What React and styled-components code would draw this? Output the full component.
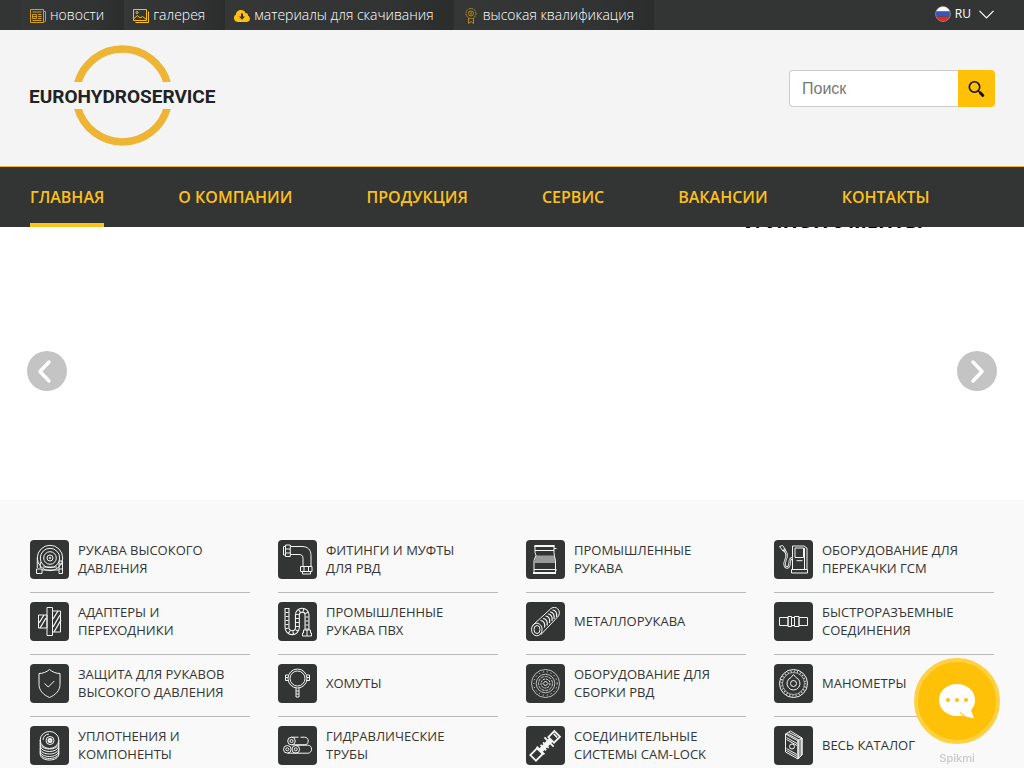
import React from "react";
import styled, { createGlobalStyle } from "styled-components";

const GlobalStyle = createGlobalStyle`
  *, *::before, *::after { box-sizing: border-box; }
  body {
    margin: 0;
    background: #f9f9f9;
    color: #333534;
    font-family: "Open Sans", "Noto Sans", sans-serif;
  }
  a { color: inherit; text-decoration: none; }
`;

const Page = styled.div`
  min-height: 100vh;
  display: flex;
  flex-direction: column;
`;

const TopBar = styled.div`
  display: flex;
  justify-content: space-between;
  height: 30px;
  padding: 0 30px 0 21px;
  background: #333534;
  color: #fff;
`;

const TopLinks = styled.nav`
  display: flex;
`;

const TopLink = styled.a`
  display: flex;
  align-items: center;
  gap: 4px;
  padding: 0 20px 0 9px;
  font-size: 14px;
  font-weight: 300;
  line-height: 30px;
  white-space: nowrap;
  background: linear-gradient(to right, #353736, #323433 70%, #2b2d2c);

  svg { flex: none; margin-top: 2px; }
`;

const Language = styled.button`
  display: flex;
  align-items: center;
  gap: 4px;
  height: 28px;
  padding: 0;
  border: 0;
  background: none;
  color: #fff;
  font: 400 12px/28px "Open Sans", sans-serif;
  cursor: pointer;

  svg:last-child { margin-left: 4px; }
`;

const Header = styled.header`
  display: flex;
  justify-content: space-between;
  align-items: flex-start;
  height: 137px;
  padding: 14px 29px 0;
  background: #f4f4f4;
  border-bottom: 1px solid #eeb32f;
`;

const LogoLink = styled.a`
  display: block;
  line-height: 0;
`;

const Search = styled.form`
  display: flex;
  margin-top: 26px;
`;

const SearchInput = styled.input`
  width: 169px;
  height: 37px;
  padding: 0 12px;
  border: 1px solid #ccc;
  border-right: 0;
  border-radius: 4px 0 0 4px;
  background: #fff;
  color: #333;
  font: 16px "Liberation Sans", Arial, sans-serif;
  outline: none;

  &::placeholder { color: #777; opacity: 1; }
`;

const SearchButton = styled.button`
  display: flex;
  align-items: center;
  justify-content: center;
  width: 37px;
  height: 37px;
  padding: 0;
  border: 0;
  border-radius: 0 4px 4px 0;
  background: #ffc107;
  cursor: pointer;
`;

const MainNav = styled.nav`
  display: flex;
  gap: 74px;
  height: 60px;
  padding: 0 30px;
  background: #333534;
`;

const NavLink = styled.a`
  color: #fbc01e;
  font-size: 16px;
  font-weight: 600;
  line-height: 60px;
  white-space: nowrap;
  box-shadow: ${(p) => (p.$active ? "inset 0 -4px 0 #fbc31b" : "none")};
`;

const Carousel = styled.section`
  position: relative;
  display: flex;
  align-items: center;
  justify-content: space-between;
  height: 273px;
  padding: 15px 27px 0;
  background: #fff;
  overflow: hidden;
`;

const SlideCaption = styled.h2`
  position: absolute;
  top: -20px;
  right: 101px;
  margin: 0;
  color: #000;
  font-size: 20px;
  font-weight: 700;
  line-height: 27px;
`;

const ArrowButton = styled.button`
  width: 40px;
  height: 40px;
  padding: 0;
  border: 0;
  border-radius: 50%;
  background: #c4c4c4;
  line-height: 0;
  cursor: pointer;
`;

const Catalog = styled.section`
  flex: 1;
  padding: 31px 30px 0;
  background: #f9f9f9;
`;

const CatalogGrid = styled.div`
  display: grid;
  grid-template-columns: repeat(4, 1fr);
  column-gap: 28px;
`;

const CatalogItem = styled.a`
  display: flex;
  align-items: center;
  gap: 9px;
  height: ${(p) => (p.$last ? 48 : 62)}px;
  padding: 9px 0 ${(p) => (p.$last ? 0 : 13)}px;
  border-bottom: ${(p) => (p.$last ? 0 : 1)}px solid #bababa;
  font-size: 13px;
  font-weight: 500;
  line-height: 18px;
  text-transform: uppercase;
`;

const CatalogLabel = styled.span`
  padding-bottom: 2px;
  white-space: pre-line;
`;

const IconTile = styled.span`
  flex: none;
  width: 39px;
  height: 39px;
  border-radius: 4px;
  background: #333534;
  line-height: 0;
`;

const Chat = styled.aside`
  position: fixed;
  right: 24px;
  bottom: 2px;
  display: flex;
  flex-direction: column;
  align-items: center;
  gap: 7px;
`;

const ChatButton = styled.button`
  display: flex;
  align-items: center;
  justify-content: center;
  width: 86px;
  height: 86px;
  padding: 0;
  border: 4px solid #ffd042;
  border-radius: 50%;
  background: #ffc107;
  cursor: pointer;
`;

const ChatBrand = styled.a`
  color: #c8c8c8;
  font: 500 11px/15px Inter, sans-serif;
`;

const yellow = "#fdc00f";

const NewsIcon = () => (
  <svg width="16" height="16" viewBox="0 0 16 16" fill="none" stroke="#cf9f18">
    <path d="M.5 1.5h13v13h-13zM13.5 3.5h2v9.5l-1.500 1.500M2.500 4h9M2.500 12.500h9M8 6.500h3.500M8 8.500h3.500M8 10.500h3.500" />
    <path d="M2.500 6.500h4v4h-4zM2.500 8.500h4" />
  </svg>
);

const GalleryIcon = () => (
  <svg width="16" height="16" viewBox="0 0 16 16" fill="none" stroke={yellow}>
    <path d="M.5 1.500h13v11h-13zM2.500 14.500h13V3.500" />
    <path d="M1 10.500l3.500-3 2.500 2.500 2.500-1.500 4 3" />
    <circle cx="4" cy="4.500" r="1" />
  </svg>
);

const CloudIcon = () => (
  <svg width="16" height="16" viewBox="0 0 16 16">
    <path d="M4 14a4 4 0 0 1-2-7.500C2 3.500 4.500 2 7 2c2.300 0 4 1.200 4.500 3 1.800 0 2.800 1.200 2.500 2.700C17 9 16.500 14 12.500 14z" fill={yellow} />
    <path d="M7 5.500h2v3h2L8 11.800 5 8.500h2z" fill="#333534" />
  </svg>
);

const AwardIcon = () => (
  <svg width="16" height="16" viewBox="0 0 16 16" fill="none" stroke="#b48b1b">
    <circle cx="8" cy="5.500" r="5" strokeDasharray="2 .6" />
    <circle cx="8" cy="5.500" r="2.500" />
    <path d="M8 4v3M5.500 10v5.500L8 13.500l2.500 2V10" />
  </svg>
);

const FlagIcon = () => (
  <svg width="16" height="16" viewBox="0 0 16 16">
    <clipPath id="flagDisc"><circle cx="8" cy="8" r="7.500" /></clipPath>
    <g clipPath="url(#flagDisc)">
      <path fill="#fff" d="M0 0h16v5.500H0z" />
      <path fill="#3657b5" d="M0 5.500h16v5H0z" />
      <path fill="#d03030" d="M0 10.500h16V16H0z" />
    </g>
    <circle cx="8" cy="8" r="7.500" fill="none" stroke="#a9a4b2" strokeWidth=".6" />
  </svg>
);

const ChevronIcon = () => (
  <svg width="15" height="9" viewBox="0 0 15 9" fill="none" stroke="#fff" strokeWidth="1.200">
    <path d="M.5 .8l7 7 7-7" />
  </svg>
);

const SearchIcon = () => (
  <svg width="18" height="18" viewBox="0 0 18 18" fill="none" stroke="#15120a" strokeLinecap="round">
    <circle cx="6.500" cy="7" r="5.200" strokeWidth="1.600" />
    <path d="M10.300 10.800l2 2" strokeWidth="1.400" />
    <path d="M12.300 12.800l2.500 2.700" strokeWidth="3" />
  </svg>
);

const Logo = () => (
  <svg width="188" height="104" viewBox="0 0 188 104" role="img" aria-label="EUROHYDROSERVICE">
    <g fill="none" stroke="#eeb433" strokeWidth="7.500">
      <path d="M48.600 39.500a46.500 46.500 0 0 1 89.800 0" />
      <path d="M48.600 63.500a46.500 46.500 0 0 0 89.800 0" />
    </g>
    <path d="M42 38h103v27H42z" fill="#f4f4f4" />
    <text x="0" y="59" fill="#222" fontFamily="Roboto, sans-serif" fontWeight="700" fontSize="19">EUROHYDROSERVICE</text>
  </svg>
);

const ArrowIcon = ({ d }) => (
  <svg width="40" height="40" viewBox="0 0 40 40" fill="none" stroke="#fff" strokeWidth="3.500" strokeLinecap="round" strokeLinejoin="round">
    <path d={d} />
  </svg>
);

const ChatIcon = () => (
  <svg width="38" height="38" viewBox="0 0 38 38">
    <path d="M19 2C9 2 1 8.800 1 18s8 16 18 16c1.700 0 3.300-.2 4.800-.6L36 36.500l-3-8.500c2.500-2.500 4-5.700 4-10C37 8.800 29 2 19 2z" fill="#fff" />
    <path d="M22 30.500l5 3.500" stroke="#ffc107" />
    <g fill="#ffc107"><circle cx="10" cy="18" r="2" /><circle cx="19" cy="18" r="2" /><circle cx="28" cy="18" r="2" /></g>
  </svg>
);

const drawings = {
  coil: (
    <>
      <circle cx="20" cy="18" r="12.700" /><circle cx="20" cy="18" r="9.700" /><circle cx="20" cy="18" r="6.300" /><circle cx="20" cy="18" r="3" /><circle cx="20" cy="18" r=".8" />
      <path d="M7.300 18v10M10.300 22v6M6.500 29h5.500v4.500H6.500zM12 30h17M13 27h14M29 21h3.500v12.500H29zM29 24h3.500M29 29h3.500" />
    </>
  ),
  adapter: (
    <>
      <path d="M17 5.500h5.500v28H17zM8.500 13H17v13H8.500zM22.500 9h8v21h-8z" />
      <path d="M9 21l5-8M10 26l6-10M23 17l5-8M23 25l7-12M24 30l7-12" strokeWidth="1.300" />
    </>
  ),
  shield: (
    <><path d="M19.500 5.500c3 2.500 6.500 4 10.500 4v11c0 6-4.500 10.500-10.500 13-6-2.500-10.500-7-10.500-13v-11c4 0 7.500-1.500 10.500-4z" /><path d="M14.500 19.500l3.800 3.500 6-6" /></>
  ),
  rings: (
    <>
      <ellipse cx="19.500" cy="14" rx="9.300" ry="8.500" /><circle cx="20" cy="14.500" r="4" /><circle cx="20" cy="14.500" r="1.500" strokeWidth="2" />
      <path d="M13 14a6.500 6 0 0 1 6-6M10.200 14v14c0 8 18.600 8 18.600 0V14M10.200 17c0 8 18.600 8 18.600 0M10.200 19.500c0 8 18.600 8 18.600 0M10.200 22c0 8 18.600 8 18.600 0M10.200 24.500c0 8 18.600 8 18.600 0M10.200 26.500c0 8 18.600 8 18.600 0" />
    </>
  ),
  elbow: (
    <><path d="M7.500 5h4.800v11.500H7.500zM5.500 6.500h2v8.500h-2zM7.500 9h5M7.500 13h5M12.500 6.500H24c6 0 9 3.500 9 9v11M12.500 14.500H21c3 0 4 1.500 4 4v8M22.500 26.500h11.500v5H22.500zM26 26.500v5M30.500 26.500v5M24.500 31.500v2.500h8v-2.500" /></>
  ),
  pvc: (
    <>
      <path d="M9 6v19.500a5.200 5.200 0 0 0 10.400 0V13a4.800 4.800 0 0 1 9.600 0v15" strokeWidth="5" />
      <path d="M9 7v18.500a5.200 5.200 0 0 0 10.400 0V13a4.800 4.800 0 0 1 9.600 0v15" stroke="#333534" strokeWidth="2.800" />
      <path d="M9 6v19.500a5.200 5.200 0 0 0 10.400 0V13a4.800 4.800 0 0 1 9.600 0v15" strokeWidth="3" strokeDasharray="1 3" />
      <path d="M25.500 28h7v3h1v3H24.500v-3h1zM29 28v6" fill="#333534" />
    </>
  ),
  clamp: (
    <><circle cx="19.500" cy="14.500" r="9.500" /><circle cx="19.500" cy="14.500" r="7.500" /><path d="M10 11H7.500v5.500H10M7.500 13.500H10M29 11h2.500v5.500H29M29 13.500h2.500M18 24v9h3v-9M18 27h3M18 30h3" /></>
  ),
  pipes: (
    <>
      <circle cx="13.500" cy="15" r="3.800" /><circle cx="13.500" cy="15" r="1.500" /><path d="M13.500 11.200h7m2 0h4c5 0 5 7.600 0 7.600h-13" />
      <circle cx="9.300" cy="23.300" r="3.800" /><circle cx="9.300" cy="23.300" r="1.500" /><circle cx="17.800" cy="23.300" r="3.800" /><circle cx="17.800" cy="23.300" r="1.500" />
      <path d="M17.800 19.200h12c5 0 5 8 0 8h-20" />
    </>
  ),
  layflat: (
    <>
      <path d="M10 15.500h18.500l1 7.500h-21z" fill="#999" stroke="none" />
      <path d="M8.500 5.500h20M8.500 6.500h20M9 10.500h19M9 5.500v7l1 3-2 5v13M28 5.500v7l.5 4 1 4v13M8 29.500h21M7 32.500h23M7 33.500h23M28 8.500h2.500M29 30h2" />
    </>
  ),
  metalHose: (
    <>
      <ellipse cx="10.800" cy="27.500" rx="5.300" ry="6.300" /><ellipse cx="11" cy="27.500" rx="3" ry="4" />
      <path d="M6.500 23.500L25 6.500c5-3.500 10.500 2 7.500 7.500L14.500 33" />
      <path d="M14.500 18.500c3 0 5 3 4 7M17 16.500c3 0 5 3 4 7M19.500 14c3 0 5 3 4 7M22 12c3 0 5 3 4 7M24 10c3 0 5 3 4 7M26.500 8c3 0 5 3 4 7" strokeWidth="1.200" />
    </>
  ),
  disc: (
    <>
      <circle cx="19.500" cy="19.500" r="14" strokeWidth=".7" /><circle cx="19.500" cy="19.500" r="11.700" strokeDasharray="1 3" /><circle cx="19.500" cy="19.500" r="9.300" strokeWidth=".7" /><circle cx="19.500" cy="19.500" r="7" strokeDasharray="3 1" strokeWidth=".8" /><circle cx="19.500" cy="19.500" r="4.500" strokeDasharray="2 1" /><path d="M19.500 17l2.500 2.500-2.500 2.500-2.500-2.500z" />
    </>
  ),
  camlock: (
    <g transform="rotate(-45 19.500 19.500)" strokeWidth="1.800">
      <path d="M2 15.500h9.500v8H2zM27.500 15.500H36v8h-8.500z" />
      <path d="M11.500 19.500h16" strokeWidth="5" />
      <path d="M12.500 14v11M16.500 15.500v8M20 15.500v8M24.500 13v13" />
      <path d="M33.500 17v5" strokeWidth="1.500" />
    </g>
  ),
  pump: (
    <>
      <path d="M18.500 29V6h11.500l3 2v21M21 8h8.500v9.500H21zM22.500 20.700h6M17.500 29.500h16v3.500h-16zM30.500 8v21" />
      <path d="M9 9.500c4 2.500 5 5.500 2.500 10.500-2 4.500-.5 8 2 7.500 4-.8 0-9 5-9.500" strokeWidth="2.400" />
      <path d="M9 9.500c4 2.500 5 5.500 2.500 10.500-2 4.500-.5 8 2 7.500 4-.8 0-9 5-9.500" stroke="#333534" strokeWidth=".8" />
      <path d="M5.500 6.500l3-1 3 4-2.500 1.500z" />
    </>
  ),
  coupling: (
    <><path d="M5.500 15.500H14v8H5.500zM14 14.500h3.500v10H14zM17.500 15.500h3v8h-3zM20.500 14.500h4.500v10h-4.500zM25 15.500h8.500v8H25z" /></>
  ),
  gauge: (
    <><circle cx="19.500" cy="19.500" r="14" /><circle cx="19.500" cy="19.500" r="12" strokeWidth="2" strokeDasharray=".8 2.340" /><circle cx="19.500" cy="19.500" r="11" strokeWidth=".6" /><path d="M19.500 10.500l2.500 3a6.500 6.500 0 1 1-5 0z" /><circle cx="19.500" cy="19.500" r="3" /></>
  ),
  book: (
    <>
      <path d="M24 15l4-3v17l-4 4z" fill="#999" />
      <path d="M11.500 8l5-3L28 12v17l-4 4-12.500-7zM11.500 8L24 15v18" />
      <path d="M13 7.500l12 6.500M15 6.500l12 6M12.500 11.500l10.500 6M12.500 13.500l10.500 6M12.500 22.500l10.500 6M12.500 24.500l10.500 6" />
      <circle cx="18" cy="20.500" r="2.500" />
    </>
  ),
};

const Drawing = ({ name }) => (
  <svg width="39" height="39" viewBox="0 0 39 39" fill="none" stroke="#f4f4f4" aria-hidden="true">
    {drawings[name]}
  </svg>
);

const topLinks = [
  ["новости", NewsIcon],
  ["галерея", GalleryIcon],
  ["материалы для скачивания", CloudIcon],
  ["высокая квалификация", AwardIcon],
];

const navLinks = ["ГЛАВНАЯ", "О КОМПАНИИ", "ПРОДУКЦИЯ", "СЕРВИС", "ВАКАНСИИ", "КОНТАКТЫ"];

const catalog = [
  ["coil", "Рукава высокого\nдавления"],
  ["elbow", "Фитинги и муфты\nдля РВД"],
  ["layflat", "Промышленные\nрукава"],
  ["pump", "Оборудование для\nперекачки ГСМ"],
  ["adapter", "Адаптеры и\nпереходники"],
  ["pvc", "Промышленные\nрукава ПВХ"],
  ["metalHose", "Металлорукава"],
  ["coupling", "Быстроразъемные\nсоединения"],
  ["shield", "Защита для рукавов\nвысокого давления"],
  ["clamp", "Хомуты"],
  ["disc", "Оборудование для\nсборки РВД"],
  ["gauge", "Манометры"],
  ["rings", "Уплотнения и\nкомпоненты"],
  ["pipes", "Гидравлические\nтрубы"],
  ["camlock", "Соединительные\nсистемы CAM-LOCK"],
  ["book", "Весь каталог"],
];

export default function App() {
  return (
    <Page>
      <GlobalStyle />
      <TopBar>
        <TopLinks>
          {topLinks.map(([label, Icon]) => (
            <TopLink href="#" key={label}><Icon />{label}</TopLink>
          ))}
        </TopLinks>
        <Language type="button"><FlagIcon />RU<ChevronIcon /></Language>
      </TopBar>
      <Header>
        <LogoLink href="#"><Logo /></LogoLink>
        <Search onSubmit={(e) => e.preventDefault()}>
          <SearchInput type="text" placeholder="Поиск" aria-label="Поиск" />
          <SearchButton type="submit" aria-label="Поиск"><SearchIcon /></SearchButton>
        </Search>
      </Header>
      <MainNav>
        {navLinks.map((label, i) => (
          <NavLink href="#" key={label} $active={i === 0}>{label}</NavLink>
        ))}
      </MainNav>
      <Carousel>
        <SlideCaption>И ИНСТРУМЕНТЫ</SlideCaption>
        <ArrowButton type="button" aria-label="Назад"><ArrowIcon d="M22 11l-9 9.500 9 9.500" /></ArrowButton>
        <ArrowButton type="button" aria-label="Вперёд"><ArrowIcon d="M16 11l9 9.500-9 9.500" /></ArrowButton>
      </Carousel>
      <Catalog>
        <CatalogGrid>
          {catalog.map(([icon, label], i) => (
            <CatalogItem href="#" key={label} $last={i >= 12}>
              <IconTile><Drawing name={icon} /></IconTile>
              <CatalogLabel>{label}</CatalogLabel>
            </CatalogItem>
          ))}
        </CatalogGrid>
      </Catalog>
      <Chat>
        <ChatButton type="button" aria-label="Чат"><ChatIcon /></ChatButton>
        <ChatBrand href="#">Spikmi</ChatBrand>
      </Chat>
    </Page>
  );
}
